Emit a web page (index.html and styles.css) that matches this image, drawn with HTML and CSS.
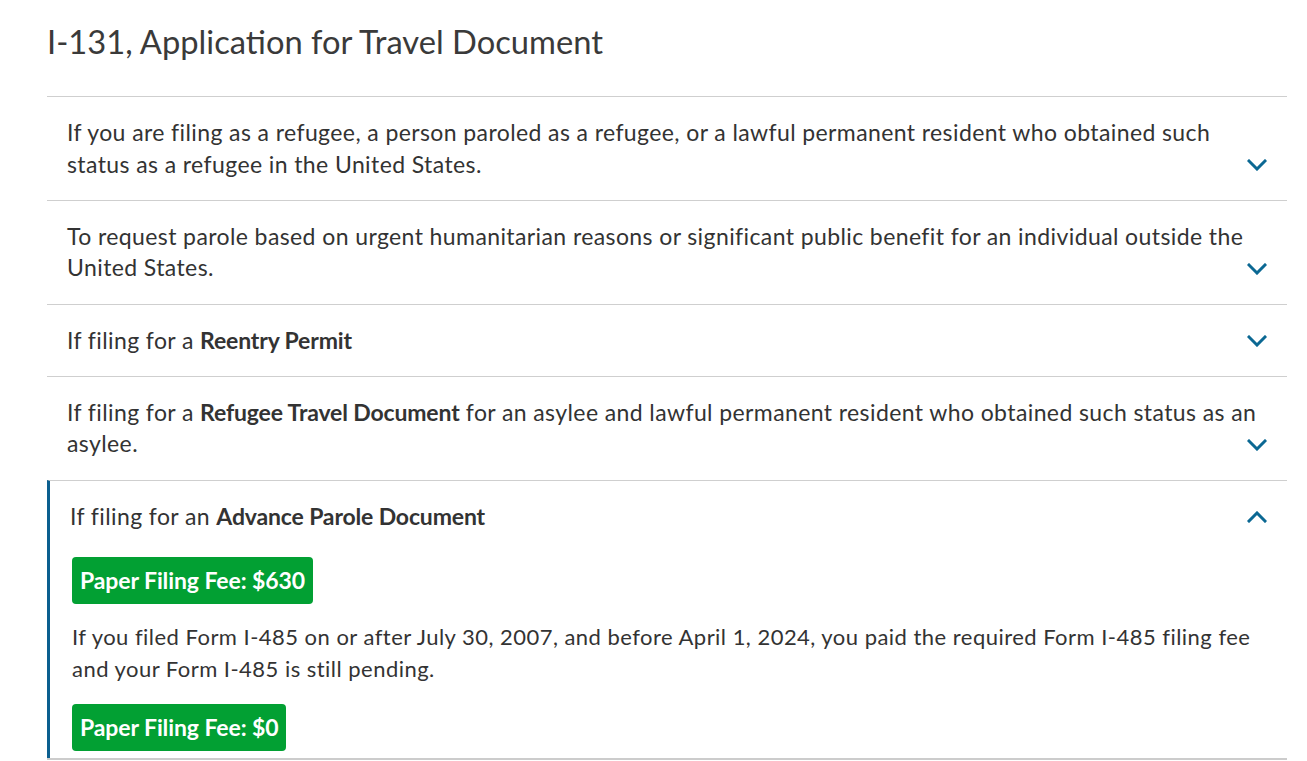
FILE: index.html
```html
<!DOCTYPE html>
<html lang="en">
<head>
<meta charset="utf-8">
<title>I-131 Fees</title>
<link rel="stylesheet" href="styles.css">
</head>
<body>
<main class="page">
  <h1 class="title">I-131, Application for Travel Document</h1>
  <div class="accordion">
    <div class="item">
      <div class="head">
        <span class="label">If you are filing as a refugee, a person paroled as a refugee, or a lawful permanent resident who obtained such status as a refugee in the United States.</span>
        <svg class="chev" viewBox="0 0 20 12" width="20" height="12"><path d="M2 2 L10 10 L18 2" fill="none" stroke="currentColor" stroke-width="3" stroke-linecap="square"/></svg>
      </div>
    </div>
    <div class="item">
      <div class="head">
        <span class="label">To request parole based on urgent humanitarian reasons or significant public benefit for an individual outside the United States.</span>
        <svg class="chev" viewBox="0 0 20 12" width="20" height="12"><path d="M2 2 L10 10 L18 2" fill="none" stroke="currentColor" stroke-width="3" stroke-linecap="square"/></svg>
      </div>
    </div>
    <div class="item">
      <div class="head">
        <span class="label">If filing for a <b>Reentry Permit</b></span>
        <svg class="chev" viewBox="0 0 20 12" width="20" height="12"><path d="M2 2 L10 10 L18 2" fill="none" stroke="currentColor" stroke-width="3" stroke-linecap="square"/></svg>
      </div>
    </div>
    <div class="item">
      <div class="head">
        <span class="label">If filing for a <b>Refugee Travel Document</b> for an asylee and lawful permanent resident who obtained such status as an asylee.</span>
        <svg class="chev" viewBox="0 0 20 12" width="20" height="12"><path d="M2 2 L10 10 L18 2" fill="none" stroke="currentColor" stroke-width="3" stroke-linecap="square"/></svg>
      </div>
    </div>
    <div class="item open">
      <div class="head">
        <span class="label">If filing for an <b>Advance Parole Document</b></span>
        <svg class="chev" viewBox="0 0 20 12" width="20" height="12"><path d="M2 10 L10 2 L18 10" fill="none" stroke="currentColor" stroke-width="3" stroke-linecap="square"/></svg>
      </div>
      <div class="body">
        <span class="fee">Paper Filing Fee: $630</span>
        <p class="text">If you filed Form I-485 on or after July 30, 2007, and before April 1, 2024, you paid the required Form I-485 filing fee and your Form I-485 is still pending.</p>
        <span class="fee">Paper Filing Fee: $0</span>
      </div>
    </div>
  </div>
</main>
</body>
</html>
```

FILE: styles.css
```css
html, body {
  margin: 0;
  padding: 0;
  background: #ffffff;
}
body {
  font-family: "Lato", "Liberation Sans", sans-serif;
  color: #333333;
}
.page {
  padding: 0 20px 0 47px;
}
.title {
  margin: 0;
  padding-top: 22px;
  height: 96px;
  box-sizing: border-box;
  font-size: 32.7px;
  font-weight: 400;
  line-height: 40px;
  color: #3a3a3a;
}
.accordion {
  border-bottom: 2px solid #cccccc;
}
.item {
  border-top: 1px solid #cfcfcf;
}
.head {
  display: grid;
  padding: 20px 20px 19.6px 20px;
}
.label,
.chev {
  grid-area: 1 / 1;
}
.label {
  font-size: 23px;
  line-height: 31.6px;
  letter-spacing: 0.4px;
}
.label b {
  font-weight: 700;
  letter-spacing: -0.15px;
}
.chev {
  justify-self: end;
  align-self: end;
  color: #0b6893;
  margin-bottom: 9px;
}
.open {
  border-left: 3px solid #0b5f8f;
}
.open .head {
  padding-bottom: 0;
}
.body {
  display: flex;
  flex-direction: column;
  align-items: flex-start;
  padding: 25px 20px 7px 22px;
}
.fee {
  display: inline-block;
  background: #02a033;
  color: #ffffff;
  font-weight: 700;
  font-size: 23px;
  line-height: 47px;
  padding: 0 8px;
  border-radius: 4px;
  letter-spacing: -0.1px;
}
.text {
  margin: 17px 0 19px 0;
  font-size: 22px;
  line-height: 31.7px;
  letter-spacing: 0.47px;
}
```
